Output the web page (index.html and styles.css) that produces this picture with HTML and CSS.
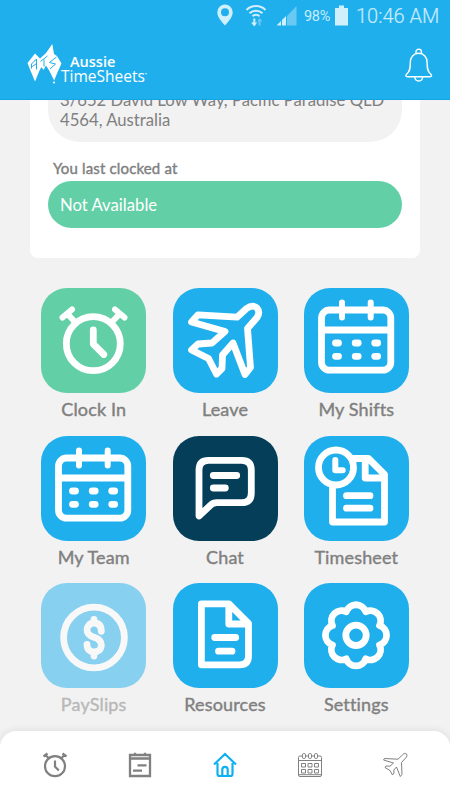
FILE: index.html
```html
<!DOCTYPE html>
<html lang="en">
<head>
    <meta charset="UTF-8">
    <meta name="viewport" content="width=device-width, initial-scale=1.0">
    <title>Aussie TimeSheets</title>
    <link rel="stylesheet" href="styles.css">
</head>
<body>

<header>
    <div class="status-bar">
        <svg class="pin" width="16" height="22" viewBox="0 0 16 22"><path fill-rule="evenodd" d="M8 0.5a7.7 7.7 0 0 0-7.7 7.7C.3 13 4.500 17.500 8 21.500 11.500 17.500 15.700 13 15.700 8.200A7.700 7.700 0 0 0 8 .5zM8 4.200a4 4 0 1 1 0 8 4 4 0 0 1 0-8z"/></svg>
        <svg class="wifi" width="22" height="23" viewBox="0 0 22 23">
            <path class="arc" d="M1.500 6a13.500 13.500 0 0 1 19 0M4.500 9.300a9.300 9.300 0 0 1 13 0M7.500 12.300a5 5 0 0 1 7 0"/>
            <path d="M8.300 14.500h2v4h1.800L9.300 22.500 6 18.500h2.300z"/>
            <path class="dim" d="M15.500 21.500h-2v-4h-1.500l2.700-3.500 2.700 3.500h-1.900z"/>
        </svg>
        <svg class="signal" width="21" height="21" viewBox="0 0 21 21"><path class="dim" d="M11 11L20.500 1v19.500H11z"/><path d="M.5 20.500L5 16v4.500zM6 15l4-4v9.500H6z"/></svg>
        <span class="percent">98%</span>
        <svg class="battery" width="13" height="21" viewBox="0 0 13 21"><path d="M4 0.500h5v2.500h4v17.500H0V3h4z"/></svg>
        <span class="time">10:46 AM</span>
    </div>
    <div class="title-bar">
        <div class="logo">
            <svg width="36" height="42" viewBox="0 0 36 42">
                <path fill="#fff" d="M.5 20L8 10.500l5 5 6-5.500L25.300 1l1.700 10 3 2 4.500 7.500-4.500 10-2.800 7-5-10-3.200-5-2.500 4.500-2-3-2 3.500-4.500 11-5-12z"/>
                <path class="cut" d="M4.500 25.500V21L9.500 16v10.500M4.500 24l5-3.500M13.500 18.500l7-5.500M17 16.500v7M29.500 14l-7 5.500 6 1.500-5.500 5"/>
                <circle cx="27" cy="39.500" r="1.100" fill="#fff"/>
            </svg>
            <div class="logo-text">
                <span class="aussie">Aussie</span>
                <span class="timesheets">TimeSheets<sup>&bull;</sup></span>
            </div>
        </div>
        <svg class="bell" width="28" height="34" viewBox="0 0 28 34">
            <path d="M11 5.500V3.800a2.700 2.700 0 0 1 5.400 0v1.700M13.700 5.300c-5.200 0-8.400 4-8.400 9 0 6-.3 9-3.300 11.500-1.800 1.500-1.300 3 .5 3h22.400c1.800 0 2.300-1.500.5-3-3-2.500-3.300-5.500-3.300-11.500 0-5-3.200-9-8.400-9zM9.700 29c.3 2.600 1.900 4 4 4s3.700-1.400 4-4"/>
        </svg>
    </div>
</header>

<main>
    <div class="card">
        <div class="address">3/652 David Low Way, Pacific Paradise QLD 4564, Australia</div>
        <div class="label">You last clocked at</div>
        <div class="clocked">Not Available</div>
    </div>

    <div class="menu">
        <div class="item">
            <svg class="tile green" viewBox="0 0 105 105">
                <circle cx="52.300" cy="55.700" r="27"/>
                <path d="M52.300 42v14l10.500 10.500"/>
                <path class="medium" d="M21.500 29.500l9.500-8M26.500 26l8 8.500M74 21.500l9.500 8M78.500 26l-8 8.500"/>
            </svg>
            <span>Clock In</span>
        </div>
        <div class="item">
            <svg class="tile" viewBox="0 0 105 105">
                <path d="M25 26.800L64 29.200 73.500 20.500C78 17.500 82 17.700 84 20c2.500 3 2 6.500 0 9.500L74.500 40.500 77.500 79.500 72 86.500 60 55 49.500 67 49 80.500 43.500 86 35.500 70.500 18.500 62 25 56 39 55 52 43.500 18.500 34z"/>
            </svg>
            <span>Leave</span>
        </div>
        <div class="item">
            <svg class="tile" viewBox="0 0 105 105">
                <g id="calendar">
                    <rect x="17.500" y="22" width="69.300" height="60.200" rx="8"/>
                    <path d="M17.500 42h69"/>
                    <path class="medium" d="M38 14.500v15M66.700 14.500v15"/>
                    <path d="M31.500 55h3M51.200 55h3M70.700 55h3M31.500 68.300h3M51.200 68.300h3M70.700 68.300h3"/>
                </g>
            </svg>
            <span>My Shifts</span>
        </div>
        <div class="item">
            <svg class="tile" viewBox="0 0 105 105"><use href="#calendar"/></svg>
            <span>My Team</span>
        </div>
        <div class="item">
            <svg class="tile navy" viewBox="0 0 105 105">
                <path d="M26 80V34q0-9.700 9.700-9.700H68.600q9.700 0 9.700 9.700V57q0 9.700-9.700 9.700H44q-4 0-6.500 2.500z"/>
                <path d="M40.300 39.500H63.700M40.300 52h12"/>
            </svg>
            <span>Chat</span>
        </div>
        <div class="item">
            <svg class="tile" viewBox="0 0 105 105">
                <circle cx="32" cy="31.500" r="17.500"/>
                <path class="medium" d="M31.300 24v10.300h7.400"/>
                <path d="M50 22.500H64.500L80.500 38.500V86H28.500V50M61.200 22.500V42H80M42.500 59.700H66M42.500 72.200H66"/>
            </svg>
            <span>Timesheet</span>
        </div>
        <div class="item disabled">
            <svg class="tile" viewBox="0 0 105 105">
                <circle cx="53" cy="54.500" r="30.400"/>
                <path d="M60.300 48.300C60.300 42.500 57.500 40 53 40S46 43 46 47C46 51.500 49 53 53 54.300 57.500 55.700 60.300 57.500 60.300 62 60.300 66.500 57 69 53 69S46 66.500 46 61.500M53 36.500V40M53 69v4"/>
            </svg>
            <span>PaySlips</span>
        </div>
        <div class="item">
            <svg class="tile" viewBox="0 0 105 105">
                <path d="M28.400 20.800H56L75.500 40.500V73q0 8.800-8.800 8.800H28.400zM55.800 21V41H75M41.700 54.500H62.700M45.500 68.200H59"/>
            </svg>
            <span>Resources</span>
        </div>
        <div class="item">
            <svg class="tile" viewBox="0 0 105 105">
                <path d="M42.240 28.740A10.300 10.300 0 0 1 61.760 28.740 10.300 10.300 0 0 1 75.560 42.540 10.300 10.300 0 0 1 75.560 62.060 10.300 10.300 0 0 1 61.760 75.860 10.300 10.300 0 0 1 42.240 75.860 10.300 10.300 0 0 1 28.440 62.060 10.300 10.300 0 0 1 28.440 42.540 10.300 10.300 0 0 1 42.240 28.740z"/>
                <circle cx="52" cy="52.300" r="10.200"/>
            </svg>
            <span>Settings</span>
        </div>
    </div>
</main>

<nav>
    <svg viewBox="0 0 26 26">
        <g stroke-width="2.200"><circle cx="13" cy="14.200" r="10"/><path d="M13 8.500v6l3.800 4M1.500 4.500l4-3M3.500 3l3 3M20.500 1.500l4 3M22.500 3l-3 3"/></g>
    </svg>
    <svg viewBox="0 0 26 26">
        <path stroke-width="2.300" d="M3 3h20v21H3zM3 6.500h20M10.500 13.300h9M6 18.700h9M8 .8v3M18 .8v3"/>
    </svg>
    <svg class="active" viewBox="0 0 26 26">
        <path stroke-width="2.200" d="M2 12.500L13 2l11 10.500M5.500 11v11q0 2 2 2h11q2 0 2-2V11M10.300 23.500v-6a2.700 2.700 0 0 1 5.400 0v6"/>
    </svg>
    <svg viewBox="0 0 26 26">
        <g stroke-width="1">
            <rect x="1.500" y="4" width="23" height="20.500" rx="1.500"/>
            <path d="M1.500 8.500h23M1.500 22.700h23"/>
            <g fill="#fff"><rect x="5.500" y="1.500" width="3" height="5" rx="1.300"/><rect x="11.500" y="1.500" width="3" height="5" rx="1.300"/><rect x="17.500" y="1.500" width="3" height="5" rx="1.300"/></g>
            <path d="M4.500 11.500h4v3.500h-4zM11 11.500h4v3.500h-4zM17.500 11.500h4v3.500h-4zM4.500 17.500h4V21h-4zM11 17.500h4V21h-4zM17.500 17.500h4V21h-4z"/>
        </g>
    </svg>
    <svg viewBox="0 0 26 26">
        <path stroke-width="1" d="M2.500 6.500L16 7.200 21.500 2q2-1.200 3 0t0 3L19.500 10.500 20 22.500 18.300 24.500 14.500 15 11.800 18 12 21 10.500 23 8 18.500 3 15.500 4 14 8 14.200 11.500 11 1.500 8z"/>
    </svg>
</nav>

</body>
</html>
```

FILE: styles.css
```css
* {
    box-sizing: border-box;
}
body {
    font-family: Lato, sans-serif;
    margin: 0;
    height: 800px;
    display: flex;
    flex-direction: column;
    overflow: hidden;
    background-color: #f2f2f2;
    color: #808080;
}
svg {
    display: block;
    flex: none;
}
header {
    position: relative;
    z-index: 1;
    height: 100px;
    flex: none;
    background-color: #1fafed;
    border-bottom: 1px solid #12a5e6;
    color: white;
}
.status-bar {
    display: flex;
    align-items: center;
    height: 30px;
    padding-left: 217px;
    font-family: Roboto, sans-serif;
    color: #c9ecfb;
}
.status-bar svg {
    fill: #d0effc;
}
.wifi {
    margin-left: 12px;
}
.wifi .arc {
    fill: none;
    stroke: #d0effc;
    stroke-width: 2;
}
.status-bar .dim {
    fill: #69c9f3;
}
.signal {
    margin-left: 9px;
}
.percent {
    width: 28px;
    margin-left: 7px;
    font-size: 14.500px;
    letter-spacing: -0.3px;
    padding-top: 2px;
}
.battery {
    margin-left: 3px;
}
.time {
    margin-left: 8px;
    font-size: 20px;
    font-weight: 300;
    padding-top: 2px;
    white-space: nowrap;
    -webkit-text-stroke: 0.2px;
}
.title-bar {
    display: flex;
    justify-content: space-between;
    padding: 13px 17px 0 27px;
}
.logo {
    display: flex;
}
.logo-text {
    display: flex;
    flex-direction: column;
    font-family: "Open Sans", sans-serif;
    padding-top: 11px;
    margin-left: -2px;
}
.logo-text span {
    line-height: 15px;
    white-space: nowrap;
}
.aussie {
    margin-left: 9px;
    font-size: 14.500px;
    font-weight: 600;
}
.timesheets {
    font-size: 15.500px;
}
.logo-text sup {
    font-size: 6px;
    line-height: 0;
}
.cut {
    fill: none;
    stroke: #1fafed;
    stroke-width: 1;
}
.bell {
    margin-top: 5px;
    fill: none;
    stroke: white;
    stroke-width: 1.400;
}
main {
    flex: 1;
    min-height: 0;
}
.card {
    height: 188px;
    margin: -30px 30px 0;
    padding: 0 18px;
    background-color: white;
    border-radius: 0 0 8px 8px;
}
.address {
    height: 72px;
    padding: 20px 12px 0;
    border-radius: 32px;
    background-color: #f2f2f2;
    font-size: 16.700px;
    line-height: 20px;
}
.label {
    height: 39px;
    padding: 16px 5px 0;
    font-size: 15px;
    line-height: 20px;
    letter-spacing: 0.15px;
    -webkit-text-stroke: 0.4px;
}
.clocked {
    height: 47px;
    padding: 0 12px;
    border-radius: 24px;
    background-color: #62cfa6;
    color: white;
    font-size: 16.700px;
    line-height: 49px;
}
.menu {
    display: grid;
    grid-template-columns: repeat(3, 105px);
    grid-auto-rows: 147.500px;
    column-gap: 26.300px;
    justify-content: center;
    padding-top: 30px;
}
.item {
    font-size: 18px;
    line-height: 22px;
    letter-spacing: 0.15px;
    text-align: center;
    white-space: nowrap;
    -webkit-text-stroke: 0.4px;
}
.item span {
    display: block;
    margin-top: 5px;
}
.disabled {
    opacity: 0.5;
}
.tile {
    width: 105px;
    height: 105px;
    border-radius: 26px;
    background-color: #1fafed;
    fill: none;
    stroke: white;
    stroke-width: 6.800;
    stroke-linecap: round;
    stroke-linejoin: round;
}
.tile.green {
    background-color: #62cfa6;
}
.tile.navy {
    background-color: #043e58;
}
.tile .medium {
    stroke-width: 6;
}
nav {
    position: relative;
    display: flex;
    justify-content: space-around;
    height: 69px;
    flex: none;
    padding: 21px 13px 0 12px;
    background-color: white;
    border-radius: 16px 16px 0 0;
    box-shadow: 0 0 8px rgba(0, 0, 0, 0.1);
}
nav svg {
    width: 26px;
    height: 26px;
    fill: none;
    stroke: #808080;
}
nav .active {
    stroke: #0fb0f2;
}
```
